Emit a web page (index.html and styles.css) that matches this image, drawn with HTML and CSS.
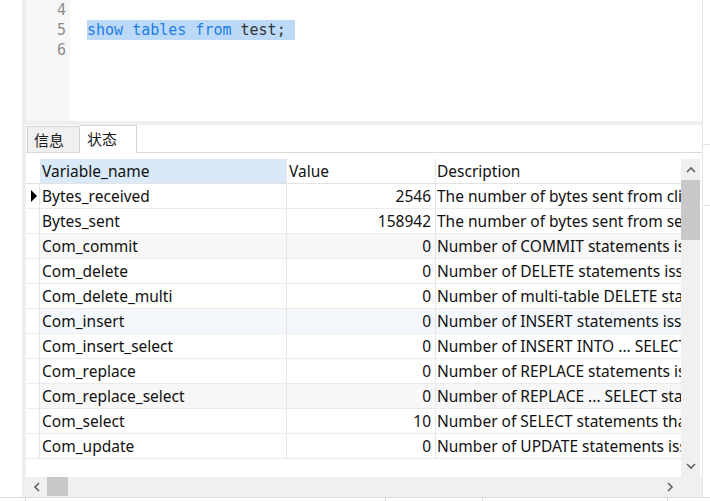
FILE: index.html
```html
<!DOCTYPE html>
<html>
<head>
<meta charset="utf-8">
<link rel="stylesheet" href="styles.css">
</head>
<body>
<div class="app">
  <div class="side"></div>
  <div class="side-sep"></div>
  <div class="main">
    <div class="editor">
      <div class="gutter">
        <div class="ln">4</div>
        <div class="ln">5</div>
        <div class="ln">6</div>
      </div>
      <div class="code">
        <div class="line"></div>
        <div class="line"><span class="sel"><span class="kw">show tables from</span> test; </span></div>
        <div class="line"></div>
      </div>
    </div>
    <div class="band"></div>
    <div class="tabs">
      <div class="tab">信息</div>
      <div class="tab active">状态</div>
    </div>
    <div class="grid-area">
      <div class="grid">
        <div class="row head">
          <div class="ind"></div>
          <div class="cell c1 sorted">Variable_name</div>
          <div class="cell c2 left">Value</div>
          <div class="cell c3">Description</div>
        </div>
        <div class="row">
          <div class="ind"><span class="arrow"></span></div>
          <div class="cell c1">Bytes_received</div>
          <div class="cell c2">2546</div>
          <div class="cell c3">The number of bytes sent from client</div>
        </div>
        <div class="row">
          <div class="ind"></div>
          <div class="cell c1">Bytes_sent</div>
          <div class="cell c2">158942</div>
          <div class="cell c3">The number of bytes sent from server</div>
        </div>
        <div class="row alt">
          <div class="ind"></div>
          <div class="cell c1">Com_commit</div>
          <div class="cell c2">0</div>
          <div class="cell c3">Number of COMMIT statements issued</div>
        </div>
        <div class="row">
          <div class="ind"></div>
          <div class="cell c1">Com_delete</div>
          <div class="cell c2">0</div>
          <div class="cell c3">Number of DELETE statements issued</div>
        </div>
        <div class="row">
          <div class="ind"></div>
          <div class="cell c1">Com_delete_multi</div>
          <div class="cell c2">0</div>
          <div class="cell c3">Number of multi-table DELETE statements issued</div>
        </div>
        <div class="row hover">
          <div class="ind"></div>
          <div class="cell c1">Com_insert</div>
          <div class="cell c2">0</div>
          <div class="cell c3">Number of INSERT statements issued</div>
        </div>
        <div class="row">
          <div class="ind"></div>
          <div class="cell c1">Com_insert_select</div>
          <div class="cell c2">0</div>
          <div class="cell c3">Number of INSERT INTO ... SELECT statements issued</div>
        </div>
        <div class="row">
          <div class="ind"></div>
          <div class="cell c1">Com_replace</div>
          <div class="cell c2">0</div>
          <div class="cell c3">Number of REPLACE statements issued</div>
        </div>
        <div class="row alt">
          <div class="ind"></div>
          <div class="cell c1">Com_replace_select</div>
          <div class="cell c2">0</div>
          <div class="cell c3">Number of REPLACE ... SELECT statements issued</div>
        </div>
        <div class="row">
          <div class="ind"></div>
          <div class="cell c1">Com_select</div>
          <div class="cell c2">10</div>
          <div class="cell c3">Number of SELECT statements that were issued</div>
        </div>
        <div class="row">
          <div class="ind"></div>
          <div class="cell c1">Com_update</div>
          <div class="cell c2">0</div>
          <div class="cell c3">Number of UPDATE statements issued</div>
        </div>
      </div>
      <div class="vscroll">
        <div class="sbtn"><svg width="10" height="7" viewBox="0 0 10 7"><polyline points="1,6 5,2 9,6" fill="none" stroke="#606060" stroke-width="1.6"/></svg></div>
        <div class="vthumb"></div>
        <div class="vspace"></div>
        <div class="sbtn"><svg width="10" height="7" viewBox="0 0 10 7"><polyline points="1,1 5,5 9,1" fill="none" stroke="#606060" stroke-width="1.6"/></svg></div>
      </div>
    </div>
    <div class="hscroll">
      <div class="hbtn"><svg width="7" height="10" viewBox="0 0 7 10"><polyline points="6,1 2,5 6,9" fill="none" stroke="#606060" stroke-width="1.6"/></svg></div>
      <div class="hthumb"></div>
      <div class="hspace"></div>
      <div class="hbtn"><svg width="7" height="10" viewBox="0 0 7 10"><polyline points="1,1 5,5 1,9" fill="none" stroke="#606060" stroke-width="1.6"/></svg></div>
      <div class="corner"></div>
    </div>
  </div>
  <div class="rightstrip">
    <div class="tick t1"></div>
    <div class="tick t2"></div>
  </div>
</div>
<div class="status">
  <div class="seg s1"></div>
  <div class="seg s2"></div>
  <div class="seg s3"></div>
  <div class="seg s4"></div>
  <div class="seg s5"></div>
</div>
</body>
</html>
```

FILE: styles.css
```css
html, body {
  margin: 0;
  padding: 0;
}
body {
  width: 710px;
  height: 501px;
  overflow: hidden;
  background: #ffffff;
  font-family: "Noto Sans", "Noto Sans CJK SC", sans-serif;
}
.app {
  display: flex;
  height: 497px;
}
.side {
  width: 22px;
  background: #ffffff;
}
.side-sep {
  width: 4px;
  background: #eeeeee;
}
.main {
  width: 676px;
  display: flex;
  flex-direction: column;
}
.rightstrip {
  width: 8px;
  background: #ffffff;
  border-left: 1px solid #e8e8e8;
  box-sizing: border-box;
  display: flex;
  flex-direction: column;
}
.tick {
  height: 1px;
  background: #e2e2e2;
}
.t1 { margin-top: 144px; }
.t2 { margin-top: 60px; }

/* editor */
.editor {
  height: 121px;
  display: flex;
  background: #ffffff;
}
.gutter {
  width: 44px;
  background: #f7f7f7;
  box-sizing: border-box;
  padding-right: 4px;
  text-align: right;
  font-family: "DejaVu Sans Mono", monospace;
  font-size: 15px;
  color: #8c8c8c;
}
.ln, .line {
  height: 20px;
  line-height: 20px;
}
.code {
  padding-left: 17px;
  font-family: "DejaVu Sans Mono", monospace;
  font-size: 15px;
  color: #333333;
}
.sel {
  background: #bcd9f7;
  display: inline-block;
  height: 20px;
  white-space: pre;
}
.kw {
  color: #1d7ee6;
}
.band {
  height: 4px;
  background: #efefef;
}

/* tabs */
.tabs {
  height: 27px;
  border-bottom: 1px solid #dadada;
  display: flex;
  align-items: flex-end;
  padding-left: 1px;
  font-family: "Noto Sans CJK SC", sans-serif;
  font-size: 15px;
  color: #1a1a1a;
}
.tab {
  box-sizing: border-box;
  height: 26px;
  width: 53px;
  padding-left: 6px;
  line-height: 25px;
  background: #f0f0f0;
  border: 1px solid #d2d2d2;
  border-bottom: none;
}
.tab.active {
  height: 28px;
  width: 57px;
  margin-bottom: -1px;
  padding-left: 7px;
  line-height: 26px;
  background: #ffffff;
  border-color: #d8d8d8;
  border-left: none;
}

/* grid */
.grid-area {
  height: 324px;
  display: flex;
}
.grid {
  flex: 1;
  padding-top: 6px;
  overflow: hidden;
  font-size: 15.5px;
  color: #111111;
}
.row {
  display: flex;
  height: 25px;
  box-sizing: border-box;
  border-bottom: 1px solid #ebebeb;
  white-space: nowrap;
}
.row.head {
  border-bottom-color: #e3e3e3;
}
.row.alt { background: #f7f7f7; }
.row.hover { background: #f4f8fc; }
.ind {
  width: 14px;
  flex: none;
  box-sizing: border-box;
  border-right: 1px solid #e6e6e6;
  background: #ffffff;
  position: relative;
}
.row.head .ind {
  border-right: none;
}
.arrow {
  position: absolute;
  left: 5px;
  top: 6px;
  width: 0;
  height: 0;
  border-top: 6px solid transparent;
  border-bottom: 6px solid transparent;
  border-left: 6px solid #000000;
}
.cell {
  flex: none;
  box-sizing: border-box;
  line-height: 24px;
  overflow: hidden;
}
.c1 {
  width: 247px;
  padding-left: 2px;
  border-right: 1px solid #e6e6e6;
}
.c1.sorted {
  background: #d9e9f7;
}
.c2 {
  width: 149px;
  padding-right: 4px;
  text-align: right;
  border-right: 1px solid #e6e6e6;
}
.c2.left {
  text-align: left;
  padding-left: 2px;
}
.c3 {
  width: 300px;
  padding-left: 1px;
}

/* scrollbars */
.vscroll {
  width: 19px;
  margin-top: 6px;
  margin-right: 2px;
  background: #f0f0f0;
  display: flex;
  flex-direction: column;
}
.sbtn {
  height: 21px;
  display: flex;
  align-items: center;
  justify-content: center;
}
.vthumb {
  height: 60px;
  background: #c8c8c8;
}
.vspace { flex: 1; }
.hscroll {
  height: 20px;
  background: #f0f0f0;
  display: flex;
}
.hbtn {
  width: 21px;
  display: flex;
  align-items: center;
  justify-content: center;
}
.hthumb {
  width: 21px;
  background: #c8c8c8;
  margin-bottom: 1px;
}
.hspace { flex: 1; }
.corner { width: 21px; }

/* status */
.status {
  height: 4px;
  border-top: 1px solid #dcdcdc;
  display: flex;
}
.seg {
  border-right: 1px solid #dcdcdc;
}
.s1 { width: 25px; }
.s2 { width: 359px; }
.s3 { width: 96px; }
.s4 { width: 184px; }
.s5 { flex: 1; border-right: none; }
```
